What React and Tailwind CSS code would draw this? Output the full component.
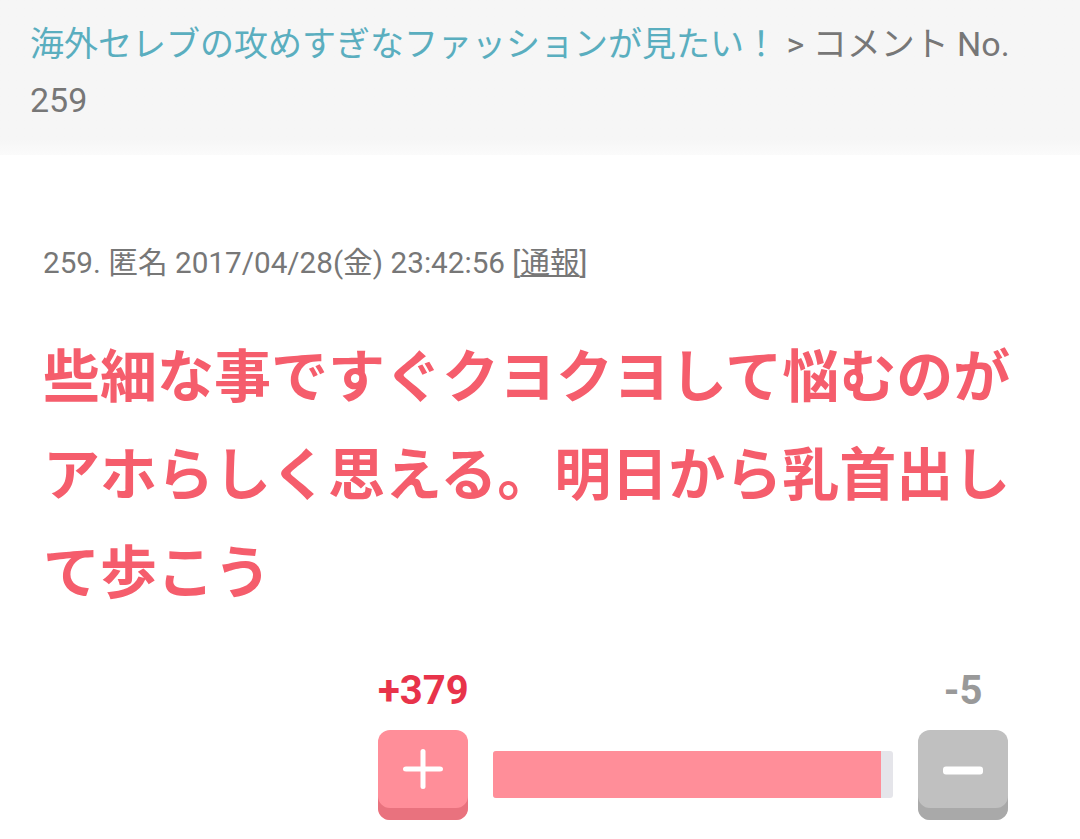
import React from 'react';

const font = { fontFamily: '"Roboto", "Noto Sans CJK JP", sans-serif' };

function VoteButton({ kind }) {
  const plus = kind === 'plus';
  return (
    <button
      className={
        'w-[90px] h-[90px] rounded-[12px] flex items-center justify-center ' +
        (plus
          ? 'bg-[#ff8e99] shadow-[inset_0_-12px_0_#e9727e]'
          : 'bg-[#c0c0c0] shadow-[inset_0_-12px_0_#a9a9a9]')
      }
    >
      <svg width="44" height="44" viewBox="0 0 44 44" className="-mt-3">
        {plus && <rect x="19.5" y="2" width="5" height="40" rx="2.5" fill="#fff" />}
        <rect x="2" y="19.5" width="40" height={plus ? 5 : 8} rx="3" fill="#fff" />
      </svg>
    </button>
  );
}

export default function App() {
  return (
    <div className="w-[1080px] min-h-[839px] bg-white" style={font}>
      {/* パンくず */}
      <div className="bg-gradient-to-b from-[#f6f6f6] from-90% to-[#fbfbfb] pl-[30px] pr-6 pt-[16px] pb-[27px] text-[34px] leading-[56px] text-[#777]">
        <span className="text-[#5aaebf]">海外セレブの攻めすぎなファッションが見たい！</span> &gt; コメント No. 259
      </div>

      <div className="pl-[43px] pr-[50px]">
        <div className="mt-[88px] text-[29.7px] leading-[40px] text-[#777]">
          259. 匿名 2017/04/28(金) 23:42:56 [<span className="underline">通報</span>]
        </div>

        <p className="mt-[46px] text-[57px] leading-[98px] font-bold text-[#f55d6c]">
          些細な事ですぐクヨクヨして悩むのがアホらしく思える。明日から乳首出して歩こう
        </p>

        {/* 投票 */}
        <div className="ml-[335px] w-[630px] mt-[46px]">
          <div className="flex justify-between text-[40px] font-bold leading-[44px]">
            <span className="w-[90px] text-center text-[#e8334a]">+379</span>
            <span className="w-[90px] text-center text-[#999]">-5</span>
          </div>
          <div className="mt-[17px] flex items-start">
            <VoteButton kind="plus" />
            <div className="mx-[25px] mt-[21px] flex-1 h-[47px] rounded-[3px] bg-[#e5e5ea] flex overflow-hidden">
              <div className="w-[97%] bg-[#ff8e99]" />
            </div>
            <VoteButton kind="minus" />
          </div>
        </div>
      </div>
    </div>
  );
}
